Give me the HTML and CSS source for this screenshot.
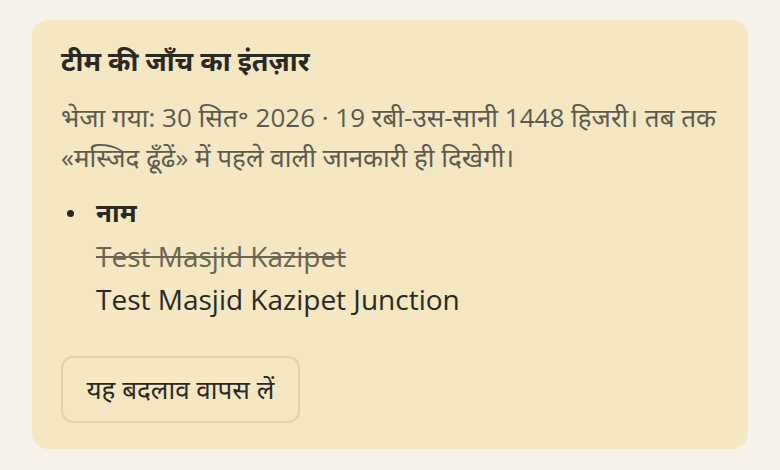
FILE: index.html
```html
<!DOCTYPE html>
<html lang="hi">
<head>
<meta charset="utf-8">
<title>टीम की जाँच का इंतज़ार</title>
<link rel="stylesheet" href="styles.css">
</head>
<body>
<div class="page">
  <section class="card">
    <h2 class="title">टीम की जाँच का इंतज़ार</h2>
    <p class="desc">भेजा गया: 30 सित॰ 2026 · 19 रबी-उस-सानी 1448 हिजरी। तब तक «मस्जिद ढूँढें» में पहले वाली जानकारी ही दिखेगी।</p>
    <ul class="changes">
      <li>
        <div class="field">नाम</div>
        <div class="old">Test Masjid Kazipet</div>
        <div class="new">Test Masjid Kazipet Junction</div>
      </li>
    </ul>
    <button class="revert" type="button">यह बदलाव वापस लें</button>
  </section>
</div>
</body>
</html>
```

FILE: styles.css
```css
html, body {
  margin: 0;
  padding: 0;
  background: #f6f1ea;
}
body {
  font-family: "Open Sans", "Noto Sans", "Noto Sans Devanagari", sans-serif;
  color: #2b2925;
}
.page {
  padding: 20px 32px 21px 32px;
}
.card {
  background: #f4e7c1;
  border-radius: 16px;
  padding: 23px 29px 24px 29px;
  min-height: 429px;
  box-sizing: border-box;
}
.title {
  margin: 0;
  font-size: 27px;
  font-weight: 700;
  line-height: 36px;
  color: #2b2925;
}
.desc {
  margin: 18px 0 0 0;
  font-size: 26px;
  line-height: 40px;
  color: #5f5a4f;
}
.changes {
  margin: 14px 0 0 0;
  padding: 0;
  list-style: none;
  font-size: 28px;
}
.changes li {
  display: grid;
  grid-template-columns: 35px 1fr;
  line-height: 43.5px;
}
.changes li::before {
  content: "";
  grid-column: 1;
  grid-row: 1;
  align-self: center;
  justify-self: start;
  width: 7px;
  height: 7px;
  margin-left: 6px;
  margin-top: 1px;
  border-radius: 50%;
  background: #2b2925;
}
.changes li > div {
  grid-column: 2;
}
.field {
  grid-row: 1;
  font-weight: 700;
  font-size: 26px;
}
.old {
  text-decoration: line-through;
  color: #6a6554;
}
.new {
  color: #2b2925;
}
.revert {
  margin-top: 34px;
  font-family: inherit;
  font-size: 26px;
  color: #2b2925;
  background: transparent;
  border: 2px solid #e0d4ab;
  border-radius: 12px;
  padding: 0 23.5px;
  height: 67px;
  cursor: pointer;
}
```
